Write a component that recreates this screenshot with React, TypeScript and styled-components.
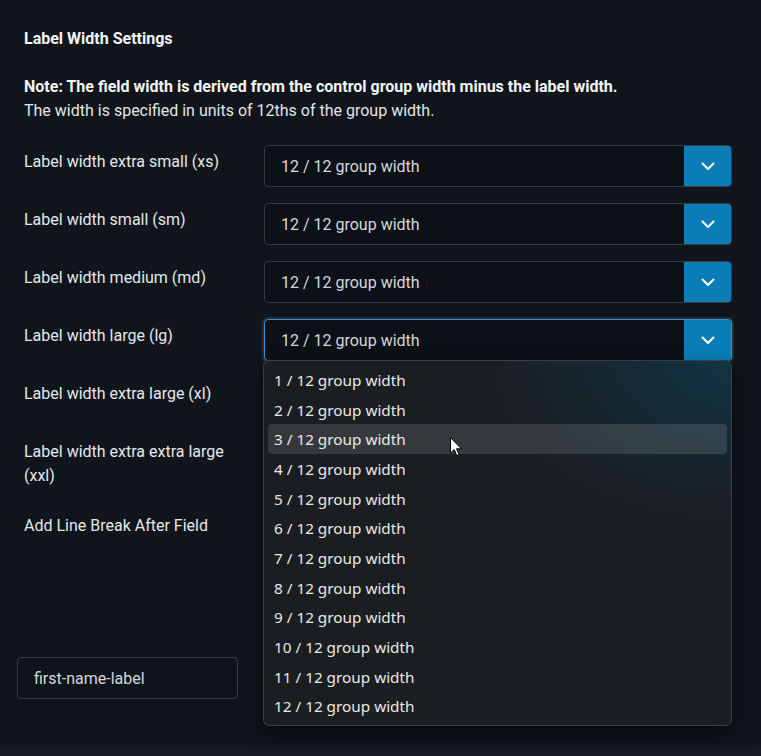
import React from "react";
import styled, { createGlobalStyle, css } from "styled-components";

const GlobalStyle = createGlobalStyle`
  html, body {
    margin: 0;
    padding: 0;
    background: #10151c;
  }
  body {
    font-family: Roboto, "Liberation Sans", sans-serif;
    color: #e4e7ea;
  }
`;

const Page = styled.div`
  position: relative;
  height: 756px;
  overflow: hidden;
  background: #10151c;
  display: flex;
  flex-direction: column;
`;

const Panel = styled.div`
  flex: 1;
  padding: 27px 29px 0 24px;
  display: flex;
  flex-direction: column;
`;

const Heading = styled.h3`
  margin: 0;
  font-size: 16px;
  font-weight: 700;
  line-height: 24px;
  color: #f2f4f6;
`;

const Note = styled.p`
  margin: 24px 0 22px;
  font-size: 16px;
  line-height: 24px;
  color: #e2e5e8;

  strong {
    font-weight: 700;
    color: #f2f4f6;
  }
`;

const Rows = styled.div`
  display: flex;
  flex-direction: column;
  gap: 16px;
`;

const Row = styled.div`
  position: relative;
  display: grid;
  grid-template-columns: 240px 1fr;
  align-items: start;
`;

const Label = styled.label`
  padding-top: 5px;
  padding-right: 24px;
  font-size: 16px;
  line-height: 24px;
  color: #e4e7ea;
`;

const SelectBox = styled.div<{ $focused?: boolean }>`
  display: flex;
  height: 42px;
  box-sizing: border-box;
  border: 1px solid #343a42;
  border-radius: 4px;
  background: #0c1117;
  overflow: hidden;
  ${(p) =>
    p.$focused &&
    css`
      border-color: #3b8ed6;
      box-shadow: 0 0 0 2px #272c33;
    `}
`;

const SelectValue = styled.div`
  flex: 1;
  display: flex;
  align-items: center;
  padding-left: 16px;
  font-size: 16px;
  color: #d3d7db;
`;

const SelectButton = styled.div`
  width: 47px;
  display: flex;
  align-items: center;
  justify-content: center;
  background: #0a7db6;
`;

const Toggle = styled.div`
  margin-top: 2px;
  width: 44px;
  height: 24px;
  border-radius: 12px;
  background: #2b323b;
`;

const IdRow = styled.div`
  margin: 119px 0 0 -7px;
  display: flex;
  gap: 24px;
`;

const TextInput = styled.div`
  width: 221px;
  height: 42px;
  box-sizing: border-box;
  border: 1px solid #343a42;
  border-radius: 4px;
  background: #0f141a;
  display: flex;
  align-items: center;
  padding-left: 16px;
  font-size: 16px;
  color: #d3d7db;
`;

const BottomBar = styled.div`
  height: 11px;
  background: #161b22;
`;

const Dropdown = styled.ul`
  position: absolute;
  top: 41px;
  left: 239px;
  width: 469px;
  height: 366px;
  box-sizing: border-box;
  margin: 0;
  padding: 4px 4px;
  list-style: none;
  border: 1px solid #3a3e44;
  border-radius: 6px;
  background:
    radial-gradient(ellipse 240px 160px at 100% 0%, rgba(8, 72, 104, 0.5), rgba(8, 72, 104, 0) 100%),
    #1b1e21;
  box-shadow: 0 8px 18px rgba(0, 0, 0, 0.5);
  z-index: 5;
`;

const Option = styled.li<{ $hover?: boolean }>`
  height: 29.7px;
  display: flex;
  align-items: center;
  padding-left: 6px;
  border-radius: 4px;
  font-family: "Noto Sans", "Open Sans", sans-serif;
  font-size: 15.3px;
  color: #e8e8e8;
  background: ${(p) => (p.$hover ? "rgba(255,255,255,0.12)" : "transparent")};
`;

const Cursor = styled.svg`
  position: absolute;
  left: 450px;
  top: 437px;
  z-index: 10;
`;

const Chevron = () => (
  <svg width="14" height="9" viewBox="0 0 14 9" fill="none">
    <path d="M1.5 1.5 L7 7 L12.5 1.5" stroke="#ffffff" strokeWidth="2" strokeLinecap="round" strokeLinejoin="round" />
  </svg>
);

const Select = ({ focused }: { focused?: boolean }) => (
  <SelectBox $focused={focused}>
    <SelectValue>12 / 12 group width</SelectValue>
    <SelectButton>
      <Chevron />
    </SelectButton>
  </SelectBox>
);

const sizes = [
  "Label width extra small (xs)",
  "Label width small (sm)",
  "Label width medium (md)",
  "Label width large (lg)",
  "Label width extra large (xl)",
  "Label width extra extra large (xxl)",
];

const options = Array.from({ length: 12 }, (_, i) => `${i + 1} / 12 group width`);

const App = () => {
  return (
    <Page>
      <GlobalStyle />
      <Panel>
        <Heading>Label Width Settings</Heading>
        <Note>
          <strong>Note: The field width is derived from the control group width minus the label width.</strong>
          <br />
          The width is specified in units of 12ths of the group width.
        </Note>
        <Rows>
          {sizes.map((s, i) => (
            <Row key={s}>
              <Label>{s}</Label>
              <Select focused={i === 3} />
              {i === 3 && (
                <Dropdown>
                  {options.map((o, j) => (
                    <Option key={o} $hover={j === 2}>
                      {o}
                    </Option>
                  ))}
                </Dropdown>
              )}
            </Row>
          ))}
          <Row style={{ marginTop: 5 }}>
            <Label>Add Line Break After Field</Label>
            <Toggle />
          </Row>
        </Rows>
        <IdRow>
          <TextInput>first-name-label</TextInput>
        </IdRow>
      </Panel>
      <BottomBar />
      <Cursor width="13" height="20" viewBox="0 0 13 20">
        <path d="M0.5 0.5 L0.5 16 L4.2 12.6 L6.8 18.6 L9 17.6 L6.5 11.8 L11.4 11.8 Z" fill="#ffffff" stroke="#000000" strokeWidth="1" />
      </Cursor>
    </Page>
  );
};

export default App;
